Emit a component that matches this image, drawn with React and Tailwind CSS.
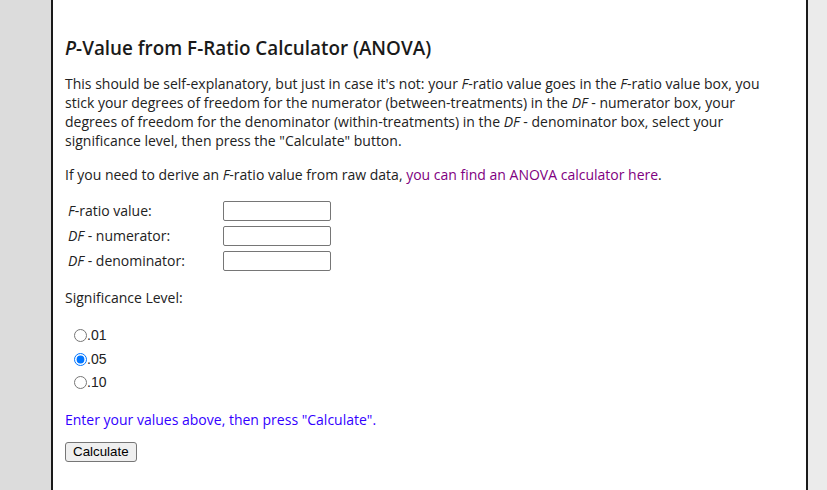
import { useState } from 'react';

export default function App() {
  const [level, setLevel] = useState('.05');

  const rows = [
    { id: 'f', label: <><i>F</i>-ratio value:</> },
    { id: 'dfn', label: <><i>DF</i> - numerator:</> },
    { id: 'dfd', label: <><i>DF</i> - denominator:</> },
  ];

  return (
    <div className="flex min-h-screen bg-[#dcdcdc] font-['Open_Sans',sans-serif] text-[#222]">
      <div className="w-[51px] shrink-0" />
      {/* main panel */}
      <main className="w-[757px] shrink-0 border-x-2 border-[#1a1a1a] bg-white pt-[36px] pl-[12px] pr-[20px]">
        <h2 className="text-[18.85px] font-semibold leading-[25px] text-[#1a1a1a]">
          <i>P</i>-Value from F-Ratio Calculator (ANOVA)
        </h2>

        <p className="mt-[13px] text-[14px] leading-[19px]">
          This should be self-explanatory, but just in case it's not: your <i>F</i>-ratio value goes in the <i>F</i>-ratio value box, you stick your degrees of freedom for the numerator (between-treatments) in the <i>DF</i> - numerator box, your degrees of freedom for the denominator (within-treatments) in the <i>DF</i> - denominator box, select your significance level, then press the "Calculate" button.
        </p>

        <p className="mt-[15px] text-[14px] leading-[19px]">
          If you need to derive an <i>F</i>-ratio value from raw data, <a href="#" className="text-[#800080]">you can find an ANOVA calculator here</a>.
        </p>

        {/* inputs */}
        <div className="mt-[17px] flex flex-col gap-[5px]">
          {rows.map(r => (
            <div key={r.id} className="flex items-center">
              <label className="w-[158px] pl-[3px] text-[14px] leading-[20px]">{r.label}</label>
              <input type="text" className="h-[20px] w-[108px] rounded-[2px] border border-[#767676] bg-white px-[2px] text-[13px]" />
            </div>
          ))}
        </div>

        <p className="mt-[17px] text-[14px] leading-[19px]">Significance Level:</p>

        <div className="mt-[20px] flex flex-col gap-[6px] pl-[9px] font-['Liberation_Sans',Arial,sans-serif] text-[14px]">
          {['.01', '.05', '.10'].map(v => (
            <label key={v} className="flex h-[17.5px] items-center">
              <input
                type="radio"
                name="level"
                checked={level === v}
                onChange={() => setLevel(v)}
                className="m-0 h-[13px] w-[13px]"
              />
              <span>{v}</span>
            </label>
          ))}
        </div>

        <p className="mt-[18px] text-[14px] leading-[19px] text-[#3300ff]">
          Enter your values above, then press "Calculate".
        </p>

        <button className="mt-[13px] h-[20px] rounded-[3px] border border-[#767676] bg-[#efefef] px-[7px] font-['Liberation_Sans',Arial,sans-serif] text-[13.33px] leading-[16px] text-black">
          Calculate
        </button>
      </main>
      <div className="flex-1 bg-[#ebebeb]" />
    </div>
  );
}
